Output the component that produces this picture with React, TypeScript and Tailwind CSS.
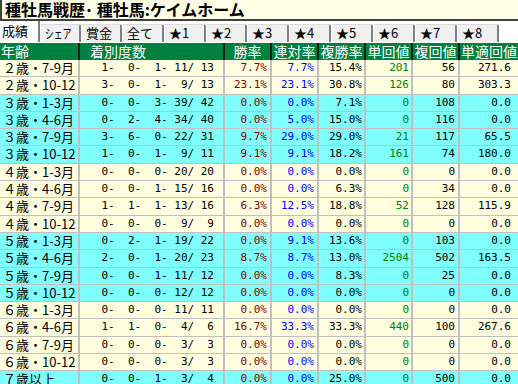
import React from 'react';

type Row = {
  age: string;
  runs: string;
  win: string;
  ren: string;
  fuku: string;
  tan: string;
  fukuKai: string;
  tanTeki: string;
  cyan: boolean;
};

const rows: Row[] = [
  { age: '２歳・7-9月', runs: '1-  0-  1- 11/ 13', win: '7.7%', ren: '7.7%', fuku: '15.4%', tan: '201', fukuKai: '56', tanTeki: '271.6', cyan: false },
  { age: '２歳・10-12', runs: '3-  0-  1-  9/ 13', win: '23.1%', ren: '23.1%', fuku: '30.8%', tan: '126', fukuKai: '80', tanTeki: '303.3', cyan: false },
  { age: '３歳・1-3月', runs: '0-  0-  3- 39/ 42', win: '0.0%', ren: '0.0%', fuku: '7.1%', tan: '0', fukuKai: '108', tanTeki: '0.0', cyan: true },
  { age: '３歳・4-6月', runs: '0-  2-  4- 34/ 40', win: '0.0%', ren: '5.0%', fuku: '15.0%', tan: '0', fukuKai: '116', tanTeki: '0.0', cyan: true },
  { age: '３歳・7-9月', runs: '3-  6-  0- 22/ 31', win: '9.7%', ren: '29.0%', fuku: '29.0%', tan: '21', fukuKai: '117', tanTeki: '65.5', cyan: true },
  { age: '３歳・10-12', runs: '1-  0-  1-  9/ 11', win: '9.1%', ren: '9.1%', fuku: '18.2%', tan: '161', fukuKai: '74', tanTeki: '180.0', cyan: true },
  { age: '４歳・1-3月', runs: '0-  0-  0- 20/ 20', win: '0.0%', ren: '0.0%', fuku: '0.0%', tan: '0', fukuKai: '0', tanTeki: '0.0', cyan: false },
  { age: '４歳・4-6月', runs: '0-  0-  1- 15/ 16', win: '0.0%', ren: '0.0%', fuku: '6.3%', tan: '0', fukuKai: '34', tanTeki: '0.0', cyan: false },
  { age: '４歳・7-9月', runs: '1-  1-  1- 13/ 16', win: '6.3%', ren: '12.5%', fuku: '18.8%', tan: '52', fukuKai: '128', tanTeki: '115.9', cyan: false },
  { age: '４歳・10-12', runs: '0-  0-  0-  9/  9', win: '0.0%', ren: '0.0%', fuku: '0.0%', tan: '0', fukuKai: '0', tanTeki: '0.0', cyan: false },
  { age: '５歳・1-3月', runs: '0-  2-  1- 19/ 22', win: '0.0%', ren: '9.1%', fuku: '13.6%', tan: '0', fukuKai: '103', tanTeki: '0.0', cyan: true },
  { age: '５歳・4-6月', runs: '2-  0-  1- 20/ 23', win: '8.7%', ren: '8.7%', fuku: '13.0%', tan: '2504', fukuKai: '502', tanTeki: '163.5', cyan: true },
  { age: '５歳・7-9月', runs: '0-  0-  1- 11/ 12', win: '0.0%', ren: '0.0%', fuku: '8.3%', tan: '0', fukuKai: '25', tanTeki: '0.0', cyan: true },
  { age: '５歳・10-12', runs: '0-  0-  0- 12/ 12', win: '0.0%', ren: '0.0%', fuku: '0.0%', tan: '0', fukuKai: '0', tanTeki: '0.0', cyan: true },
  { age: '６歳・1-3月', runs: '0-  0-  0- 11/ 11', win: '0.0%', ren: '0.0%', fuku: '0.0%', tan: '0', fukuKai: '0', tanTeki: '0.0', cyan: false },
  { age: '６歳・4-6月', runs: '1-  1-  0-  4/  6', win: '16.7%', ren: '33.3%', fuku: '33.3%', tan: '440', fukuKai: '100', tanTeki: '267.6', cyan: false },
  { age: '６歳・7-9月', runs: '0-  0-  0-  3/  3', win: '0.0%', ren: '0.0%', fuku: '0.0%', tan: '0', fukuKai: '0', tanTeki: '0.0', cyan: false },
  { age: '６歳・10-12', runs: '0-  0-  0-  3/  3', win: '0.0%', ren: '0.0%', fuku: '0.0%', tan: '0', fukuKai: '0', tanTeki: '0.0', cyan: false },
  { age: '７歳以上', runs: '0-  0-  1-  3/  4', win: '0.0%', ren: '0.0%', fuku: '25.0%', tan: '0', fukuKai: '500', tanTeki: '0.0', cyan: true },
];

const tabs = ['シェア', '賞金', '全て', '★1', '★2', '★3', '★4', '★5', '★6', '★7', '★8'];
const tabWidths = ['w-[41px]', 'w-[41px]', 'w-[42px]', 'w-[42px]', 'w-[41px]', 'w-[42px]', 'w-[42px]', 'w-[42px]', 'w-[42px]', 'w-[42px]', 'w-[42px]'];

const headers = ['年齢', '着別度数', '勝率', '連対率', '複勝率', '単回値', '複回値', '単適回値'];

const GRID = 'grid grid-cols-[80px_145px_47px_47px_47px_47px_47px_58px]';
const num = "font-['DejaVu_Sans_Mono',monospace] text-[11px] whitespace-pre text-right";

export default function App() {
  return (
    <div className="w-[518px] h-[384px] overflow-hidden bg-white font-['Noto_Sans_CJK_JP',sans-serif] text-black">
      {/* タイトル */}
      <div className="h-[21px] bg-[#ffffe6] border-l-2 border-b-2 border-[#404040] pl-[3px] text-[16px] font-bold leading-[19px] whitespace-nowrap">
        種牡馬戦歴･ 種牡馬:ケイムホーム
      </div>

      {/* タブ */}
      <div className="flex items-end h-[21px]">
        <div className="w-[40px] h-[21px] bg-white border-r-2 border-[#808080] pl-[2px] text-[13px] leading-[20px]">
          成績
        </div>
        {tabs.map((t, i) => (
          <div
            key={t}
            className={`${tabWidths[i]} h-[18px] bg-[#f0f0f0] border-l border-l-white border-t border-t-[#dcdcdc] border-r-2 border-r-[#808080] rounded-tr-[2px] pl-[4px] text-[13px] leading-[16px] whitespace-nowrap`}
          >
            {i === 0 ? (
              <span className="inline-block origin-left scale-x-[0.68]">{t}</span>
            ) : (
              t
            )}
          </div>
        ))}
      </div>

      {/* ヘッダー */}
      <div className={`${GRID} mt-[1px] h-[17px] bg-[#008040] text-white text-[14px] leading-[17px]`}>
        {headers.map((h, i) => (
          <div
            key={h}
            className={
              i === 0
                ? 'border-r-2 border-[#002010] pl-[1px]'
                : i === 1
                ? 'border-r-2 border-[#002010] pl-[10px]'
                : 'border-r-2 border-[#002010] text-center last:border-r-0'
            }
          >
            {h}
          </div>
        ))}
      </div>

      {/* データ */}
      {rows.map((r) => (
        <div
          key={r.age}
          className={`${GRID} h-[17.3px] border-b border-[#c0c0c0] ${r.cyan ? 'bg-[#80ffff]' : 'bg-[#ffffe0]'}`}
        >
          <div className="border-r-2 border-[#c0c0c0] pl-[3px] text-[13px] leading-[16px] whitespace-nowrap">{r.age}</div>
          <div className={`${num} border-r-2 border-[#c0c0c0] pr-[9px] leading-[16px]`}>{r.runs}</div>
          <div className={`${num} border-r-2 border-[#c0c0c0] pr-[3px] leading-[16px] text-[#800000]`}>{r.win}</div>
          <div className={`${num} border-r-2 border-[#c0c0c0] pr-[3px] leading-[16px] text-[#0000ff]`}>{r.ren}</div>
          <div className={`${num} border-r-2 border-[#c0c0c0] pr-[2px] leading-[16px]`}>{r.fuku}</div>
          <div className={`${num} border-r-2 border-[#c0c0c0] pr-[2px] leading-[16px] text-[#008000]`}>{r.tan}</div>
          <div className={`${num} border-r-2 border-[#c0c0c0] pr-[3px] leading-[16px]`}>{r.fukuKai}</div>
          <div className={`${num} pr-[7px] leading-[16px]`}>{r.tanTeki}</div>
        </div>
      ))}
    </div>
  );
}
